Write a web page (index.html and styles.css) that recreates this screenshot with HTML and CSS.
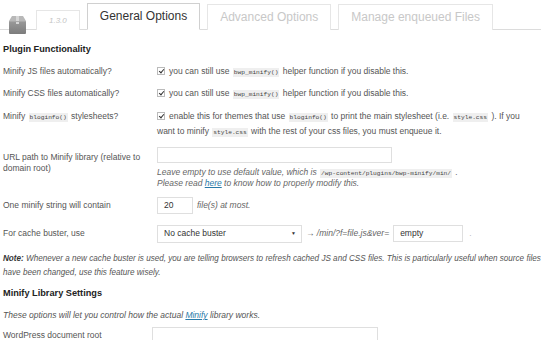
FILE: index.html
```html
<!DOCTYPE html>
<html lang="en">
<head>
    <meta charset="UTF-8">
    <title>BWP Minify - General Options</title>
    <link rel="stylesheet" href="styles.css">
</head>
<body>
    <div class="wrap">
        <div class="tabs">
            <span class="plugin-icon">
                <svg width="19" height="20" viewBox="0 0 19 20">
                    <defs>
                        <linearGradient id="box" x1="0" y1="0" x2="0" y2="1">
                            <stop offset="0" stop-color="#9a9a9a"/>
                            <stop offset="1" stop-color="#7c7c7c"/>
                        </linearGradient>
                    </defs>
                    <path d="M1 6 L4 1 H15 L18 6 Z" fill="#b8b8b8"/>
                    <rect x="1" y="6" width="17" height="13" rx="1" fill="url(#box)"/>
                    <rect x="8" y="1" width="3" height="8" fill="#d6d6d6"/>
                    <rect x="1" y="6" width="17" height="1" fill="#a8a8a8"/>
                </svg>
            </span>
            <a class="tab tab-version">1.3.0</a>
            <a class="tab tab-active">General Options</a>
            <a class="tab">Advanced Options</a>
            <a class="tab">Manage enqueued Files</a>
        </div>

        <h3>Plugin Functionality</h3>
        <div class="form-table">
            <div class="row">
                <div class="label">Minify JS files automatically?</div>
                <div class="field"><span class="cb"></span>you can still use <code>bwp_minify()</code> helper function if you disable this.</div>
            </div>
            <div class="row">
                <div class="label">Minify CSS files automatically?</div>
                <div class="field"><span class="cb"></span>you can still use <code>bwp_minify()</code> helper function if you disable this.</div>
            </div>
            <div class="row row-tall">
                <div class="label">Minify <code>bloginfo()</code> stylesheets?</div>
                <div class="field"><span class="cb"></span>enable this for themes that use <code>bloginfo()</code> to print the main stylesheet (i.e. <code>style.css</code> ). If you want to minify <code>style.css</code> with the rest of your css files, you must enqueue it.</div>
            </div>
            <div class="row row-input row-url">
                <div class="label">URL path to Minify library (relative to domain root)</div>
                <div class="field">
                    <div class="text-input input-wide"></div>
                    <p class="desc">Leave empty to use default value, which is <code>/wp-content/plugins/bwp-minify/min/</code> .<br>Please read <a href="#">here</a> to know how to properly modify this.</p>
                </div>
            </div>
            <div class="row row-input row-count">
                <div class="label">One minify string will contain</div>
                <div class="field inline">
                    <div class="text-input input-small">20</div>
                    <em class="hint">file(s) at most.</em>
                </div>
            </div>
            <div class="row row-input row-buster">
                <div class="label">For cache buster, use</div>
                <div class="field inline">
                    <div class="select">No cache buster<span class="caret">&#9660;</span></div>
                    <em class="hint">&rarr; /min/?f=file.js&amp;ver=</em>
                    <div class="text-input input-ver">empty</div>
                    <span class="dot">.</span>
                </div>
            </div>
        </div>

        <p class="note"><strong>Note:</strong> Whenever a new cache buster is used, you are telling browsers to refresh cached JS and CSS files. This is particularly useful when source files have been changed, use this feature wisely.</p>

        <h3 class="section-title">Minify Library Settings</h3>
        <p class="intro">These options will let you control how the actual <a href="#">Minify</a> library works.</p>
        <div class="form-table form-table-lib">
            <div class="row row-input row-root">
                <div class="label">WordPress document root</div>
                <div class="field">
                    <div class="text-input input-root"></div>
                </div>
            </div>
        </div>
    </div>
</body>
</html>
```

FILE: styles.css
```css
* {
    margin: 0;
    padding: 0;
    box-sizing: border-box;
}
body {
    font-family: "Liberation Sans", Arial, sans-serif;
    font-size: 8.5px;
    line-height: 11px;
    color: #555;
    background: #fff;
    overflow: hidden;
}
.wrap {
    padding-left: 3px;
}
.tabs {
    display: flex;
    align-items: flex-end;
    height: 30px;
    border-bottom: 1px solid #dcdcdc;
    margin-left: -3px;
    padding-left: 8px;
}
.plugin-icon {
    display: flex;
    margin-bottom: -6px;
    margin-right: 9px;
}
.tab {
    display: flex;
    align-items: center;
    height: 26px;
    margin-right: 7px;
    margin-bottom: -1px;
    padding: 0 12px;
    font-size: 12px;
    color: #c8c8c8;
    border: 1px solid #e6e6e6;
    border-bottom: none;
    background: #fff;
    text-decoration: none;
}
.tab-version {
    height: 20px;
    font-size: 8px;
    font-style: italic;
    color: #c4c4c4;
}
.tab-active {
    color: #333;
    border-color: #d0d0d0;
    border-bottom: 1px solid #fff;
    height: 27px;
}
h3 {
    font-size: 9.2px;
    font-weight: bold;
    color: #222;
    margin-top: 13px;
    line-height: 12px;
}
code {
    font-family: "Liberation Mono", "DejaVu Sans Mono", monospace;
    font-size: 6.2px;
    line-height: 1;
    color: #444;
    background: #efefef;
    padding: 1px 1px;
    margin: 0 1px;
}
.form-table {
    margin-top: 6px;
}
.row {
    display: grid;
    grid-template-columns: 154px 1fr;
    padding: 5px 0 6px;
}
.label {
    color: #555;
    padding-right: 8px;
}
.field {
    color: #555;
    padding-right: 10px;
}
.row-tall .label {
    padding-top: 1px;
}
.row-tall .field {
    line-height: 15px;
    margin-top: -1px;
}
.row-input .label {
    padding-top: 3px;
}
.row-url {
    padding-top: 2px;
}
.row-url .label {
    padding-top: 5px;
}
.row-count {
    padding-top: 1px;
}
.row-buster {
    padding-top: 5px;
}
.row-buster .label {
    padding-top: 3.5px;
}
.cb {
    display: inline-block;
    width: 8px;
    height: 8px;
    border: 1px solid #bbb;
    background: #fff;
    vertical-align: -1px;
    margin-right: 4px;
    position: relative;
}
.cb::after {
    content: "";
    position: absolute;
    left: 2px;
    top: 0;
    width: 2px;
    height: 4px;
    border: solid #333;
    border-width: 0 1.3px 1.3px 0;
    transform: rotate(40deg);
}
.text-input {
    height: 17px;
    border: 1px solid #dfdfdf;
    background: #fff;
    color: #333;
    padding: 0 6px;
    line-height: 15px;
}
.input-wide {
    width: 235px;
    height: 16px;
}
.input-small {
    width: 36px;
}
.input-ver {
    width: 70px;
}
.input-root {
    width: 226px;
    margin-left: -5px;
}
.desc {
    font-style: italic;
    color: #666;
    margin-top: 3.5px;
    line-height: 11.5px;
}
.desc code {
    font-style: normal;
}
a {
    color: #2a7aa8;
    text-decoration: underline;
}
.inline {
    display: flex;
    align-items: center;
    gap: 4px;
}
.hint {
    color: #666;
}
.select {
    display: flex;
    align-items: center;
    justify-content: space-between;
    width: 145px;
    height: 18px;
    border: 1px solid #dfdfdf;
    padding: 0 5px 0 6px;
    color: #333;
}
.caret {
    font-size: 5px;
    color: #333;
}
.dot {
    color: #bbb;
    margin-left: 2px;
}
.note {
    font-style: italic;
    font-size: 8.15px;
    margin-top: 3px;
    line-height: 14px;
    color: #555;
}
.note strong {
    color: #333;
}
.section-title {
    margin-top: 7px;
}
.intro {
    font-style: italic;
    margin-top: 11.5px;
    color: #555;
}
.form-table-lib {
    margin-top: 0;
}
.row-root {
    padding-top: 5.5px;
}
```
